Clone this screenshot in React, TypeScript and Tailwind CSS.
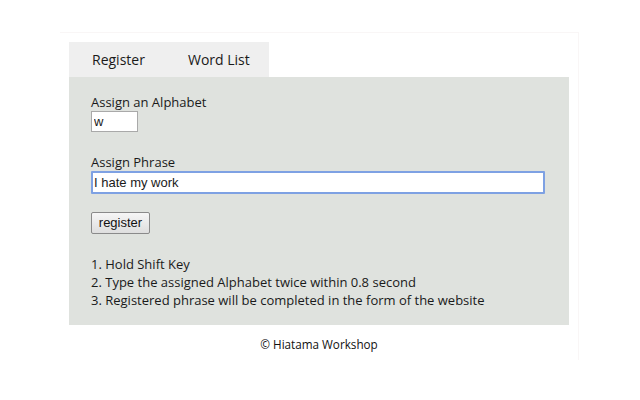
import React from "react";

export default function App() {
  const ui = { fontFamily: '"Open Sans", "Noto Sans", sans-serif' };
  const arial = { fontFamily: '"Liberation Sans", Arial, sans-serif' };
  return (
    <div className="w-[640px] h-[400px] bg-white overflow-hidden pt-[32px] pl-[60px]" style={ui}>
      <div className="w-[519px] h-[328px] border-t border-r border-[#f9f6f6] pl-[9px] pt-[9px]">
        <div className="w-[500px] text-[#1a1a1a]">
          <div className="flex w-[200px] h-[35px] bg-[#efefef] text-[14px] items-center">
            <div className="pl-[23px] w-[119px]">Register</div>
            <div>Word List</div>
          </div>
          <div className="bg-[#dfe2de] h-[248px] pl-[22px] pt-[16px] text-[13px]">
            <div className="leading-[18px]">Assign an Alphabet</div>
            <input
              readOnly
              value="w"
              className="block w-[47px] h-[21px] bg-white border border-[#a9a9a9] px-[2px] text-[13px] outline-none"
              style={arial}
            />
            <div className="leading-[18px] mt-[21px]">Assign Phrase</div>
            <input
              readOnly
              value="I hate my work"
              className="block w-[454px] h-[23px] bg-white border-2 border-[#7ea1e3] px-[1px] text-[13px] outline-none rounded-[1px]"
              style={arial}
            />
            <button
              className="block mt-[18px] w-[59px] h-[22px] border border-[#8a8a8a] rounded-[2px] bg-gradient-to-b from-[#f6f6f6] to-[#dedede] text-[13px] text-[#111]"
              style={arial}
            >
              register
            </button>
            <div className="mt-[21px] leading-[18px]">
              <div>1. Hold Shift Key</div>
              <div>2. Type the assigned Alphabet twice within 0.8 second</div>
              <div>3. Registered phrase will be completed in the form of the website</div>
            </div>
          </div>
          <div className="text-center text-[11.7px] mt-[11px] text-[#111]">© Hiatama Workshop</div>
        </div>
      </div>
    </div>
  );
}
